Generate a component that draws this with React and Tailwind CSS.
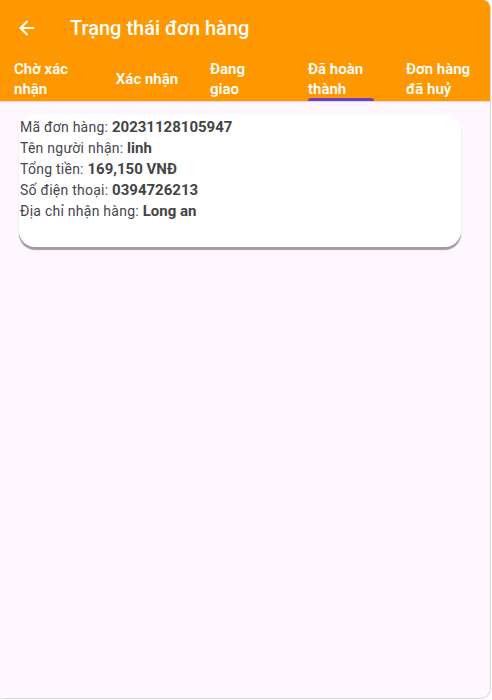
import { ArrowLeft } from "lucide-react";

const tabs = [
  { label: "Chờ xác nhận", wrap: true },
  { label: "Xác nhận", wrap: false },
  { label: "Đang giao", wrap: true },
  { label: "Đã hoàn thành", wrap: true, active: true },
  { label: "Đơn hàng đã huỷ", wrap: true },
];

const rows = [
  ["Mã đơn hàng: ", "20231128105947"],
  ["Tên người nhận: ", "linh"],
  ["Tổng tiền: ", "169,150 VNĐ"],
  ["Số điện thoại: ", "0394726213"],
  ["Địa chỉ nhận hàng: ", "Long an"],
];

export default function App() {
  return (
    <div
      className="w-[491px] h-[699px] bg-[#fef7ff] rounded-tr-[8px] rounded-br-[10px] rounded-bl-[3px] border-r border-b border-[#d9d9d9] overflow-hidden"
      style={{ fontFamily: "Roboto, 'Noto Sans', sans-serif" }}
    >
      <div className="bg-[#ff9800] shadow-[0_1px_1px_rgba(0,0,0,0.12)]">
        <div className="h-[56px] flex items-center px-[16px]">
          <ArrowLeft size={22} strokeWidth={2.2} className="text-white" />
          <h1 className="ml-[32px] text-[20px] font-medium text-white leading-none">
            Trạng thái đơn hàng
          </h1>
        </div>
        <div className="flex h-[45px]">
          {tabs.map((t) => (
            <div
              key={t.label}
              className={
                "flex-1 relative flex items-center px-[14px] " +
                (t.wrap ? "justify-start" : "justify-center")
              }
            >
              <span
                className={
                  "text-[15px] font-semibold text-white leading-[20px] " +
                  (t.wrap ? "w-[66px] text-left" : "text-center")
                }
              >
                {t.label}
              </span>
              {t.active && (
                <div className="absolute bottom-0 left-[14px] w-[66px] h-[3px] rounded-t-[3px] bg-[#6a3fc3]" />
              )}
            </div>
          ))}
        </div>
      </div>
      <div className="mx-[19px] mt-[14px] w-[442px] h-[132px] bg-white rounded-[16px] shadow-[0_3px_1px_#9e9e9e] pt-[2px] pl-[1px]">
        {rows.map(([k, v]) => (
          <p key={k} className="text-[14px] tracking-[0.25px] leading-[21px] text-[#49454f]">
            {k}
            <span className="text-[15px] tracking-normal font-bold text-[#444]">{v}</span>
          </p>
        ))}
      </div>
    </div>
  );
}
